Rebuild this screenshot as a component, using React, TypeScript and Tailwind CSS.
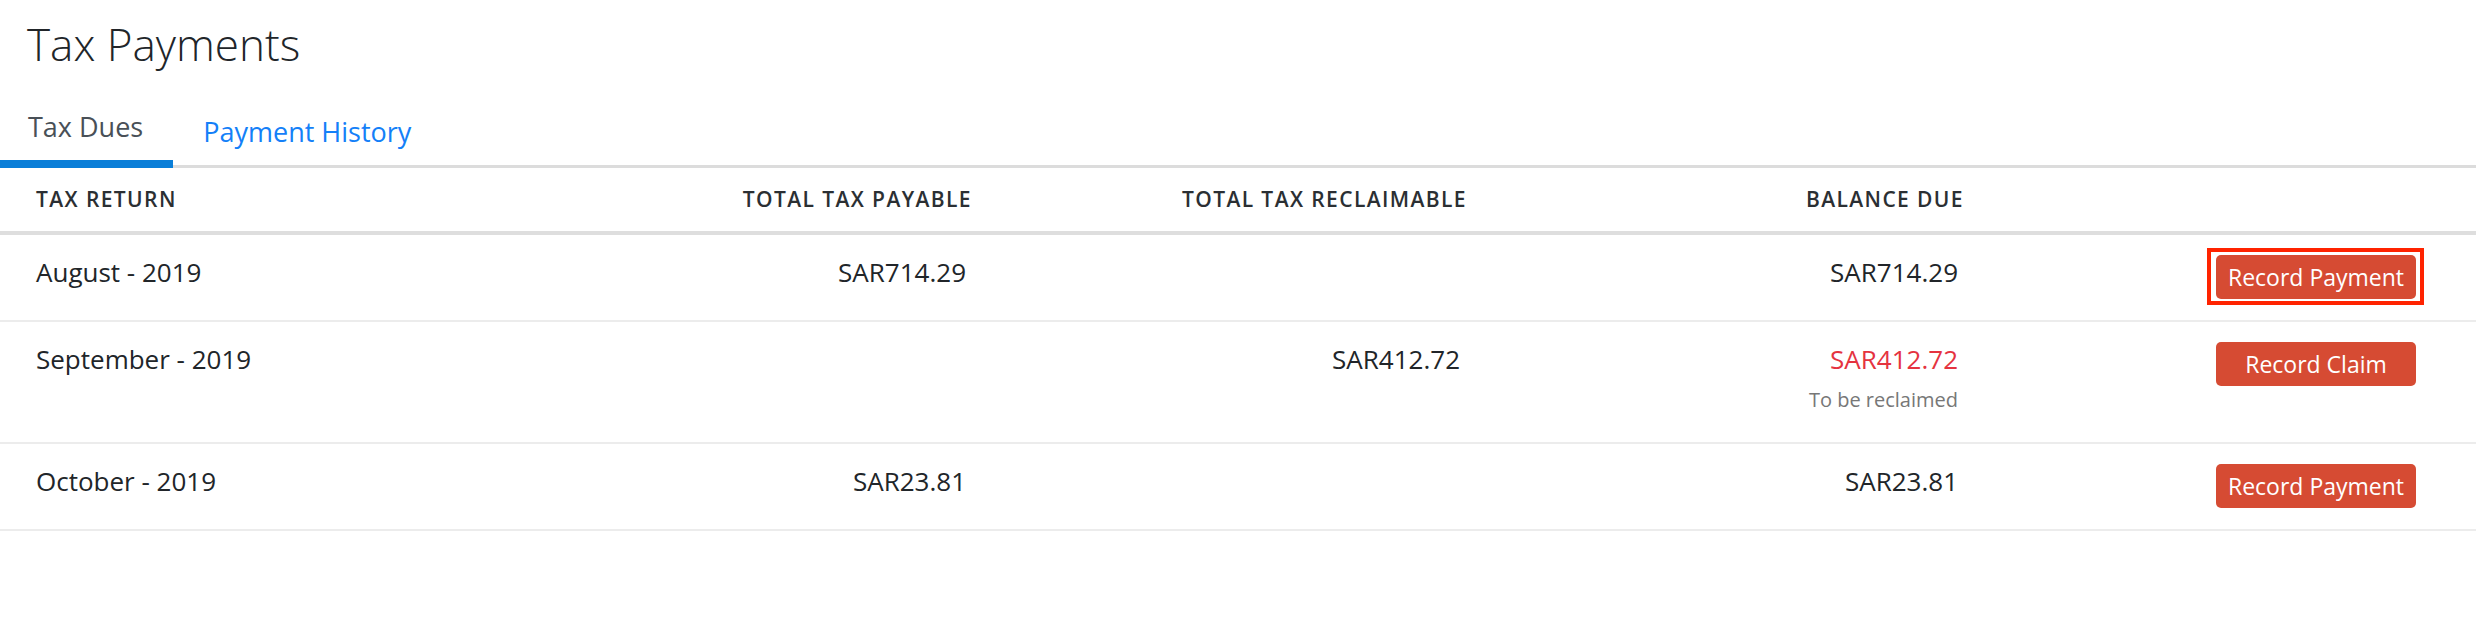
import React from "react";

interface IDue {
  period: string;
  payable?: string;
  reclaimable?: string;
  balance: string;
  reclaim?: boolean;
  action: string;
  focused?: boolean;
}

const dues: IDue[] = [
  { period: "August - 2019", payable: "SAR714.29", balance: "SAR714.29", action: "Record Payment", focused: true },
  { period: "September - 2019", reclaimable: "SAR412.72", balance: "SAR412.72", reclaim: true, action: "Record Claim" },
  { period: "October - 2019", payable: "SAR23.81", balance: "SAR23.81", action: "Record Payment" },
];

// column widths shared by header and rows
const cols = "grid grid-cols-[564px_366px_494px_498px_1fr] pl-[36px] pr-[60px]";

const App: React.FC = () => {
  return (
    <div className="min-h-screen bg-white text-[#212529] font-['Open_Sans',sans-serif]">
      <h1 className="pt-[16px] pl-[27px] text-[44px] leading-[56px] font-light text-[#212529]">
        Tax Payments
      </h1>

      {/* tabs */}
      <div className="mt-[35px] flex items-end border-b-[3px] border-[#dcdcdc]">
        <div className="-mb-[3px] pl-[28px] pr-[30px] pb-[13px] border-b-[8px] border-[#0a7ed8] text-[27px] leading-[40px] text-[#495057]">
          Tax Dues
        </div>
        <div className="pl-[30px] pr-[32px] pb-[13px] text-[27px] leading-[40px] text-[#1480f8]">
          Payment History
        </div>
      </div>

      {/* table header */}
      <div
        className={`${cols} pt-[16px] pb-[17px] border-b-4 border-[#dedede] text-[21px] leading-[30px] font-semibold tracking-[1.4px] uppercase text-[#2b2f33]`}
      >
        <div>Tax Return</div>
        <div className="text-right -mr-[6px]">Total Tax Payable</div>
        <div className="text-right -mr-[7px]">Total Tax Reclaimable</div>
        <div className="text-right -mr-[6px]">Balance Due</div>
        <div />
      </div>

      {dues.map((d) => (
        <div
          key={d.period}
          className={`${cols} items-start pt-[18px] border-b-2 border-[#ececec] text-[26px] leading-[39px] ${
            d.reclaim ? "pb-[27px]" : "pb-[21px]"
          }`}
        >
          <div>{d.period}</div>
          <div className="text-right">{d.payable}</div>
          <div className="text-right">{d.reclaimable}</div>
          <div className="text-right">
            <p className={d.reclaim ? "text-[#e5333f]" : ""}>{d.balance}</p>
            {d.reclaim && (
              <p className="mt-[6px] text-[20px] leading-[30px] text-[#777777]">To be reclaimed</p>
            )}
          </div>
          <div className="flex justify-end">
            <div className="relative mt-[2px]">
              <button className="h-[44px] w-[200px] rounded-[5px] bg-[#d64b33] text-[23px] text-white">
                {d.action}
              </button>
              {/* focus highlight box */}
              {d.focused && (
                <span className="pointer-events-none absolute -left-[9px] -right-[8px] -top-[7px] -bottom-[6px] border-4 border-[#ff2300]" />
              )}
            </div>
          </div>
        </div>
      ))}
    </div>
  );
};

export default App;
